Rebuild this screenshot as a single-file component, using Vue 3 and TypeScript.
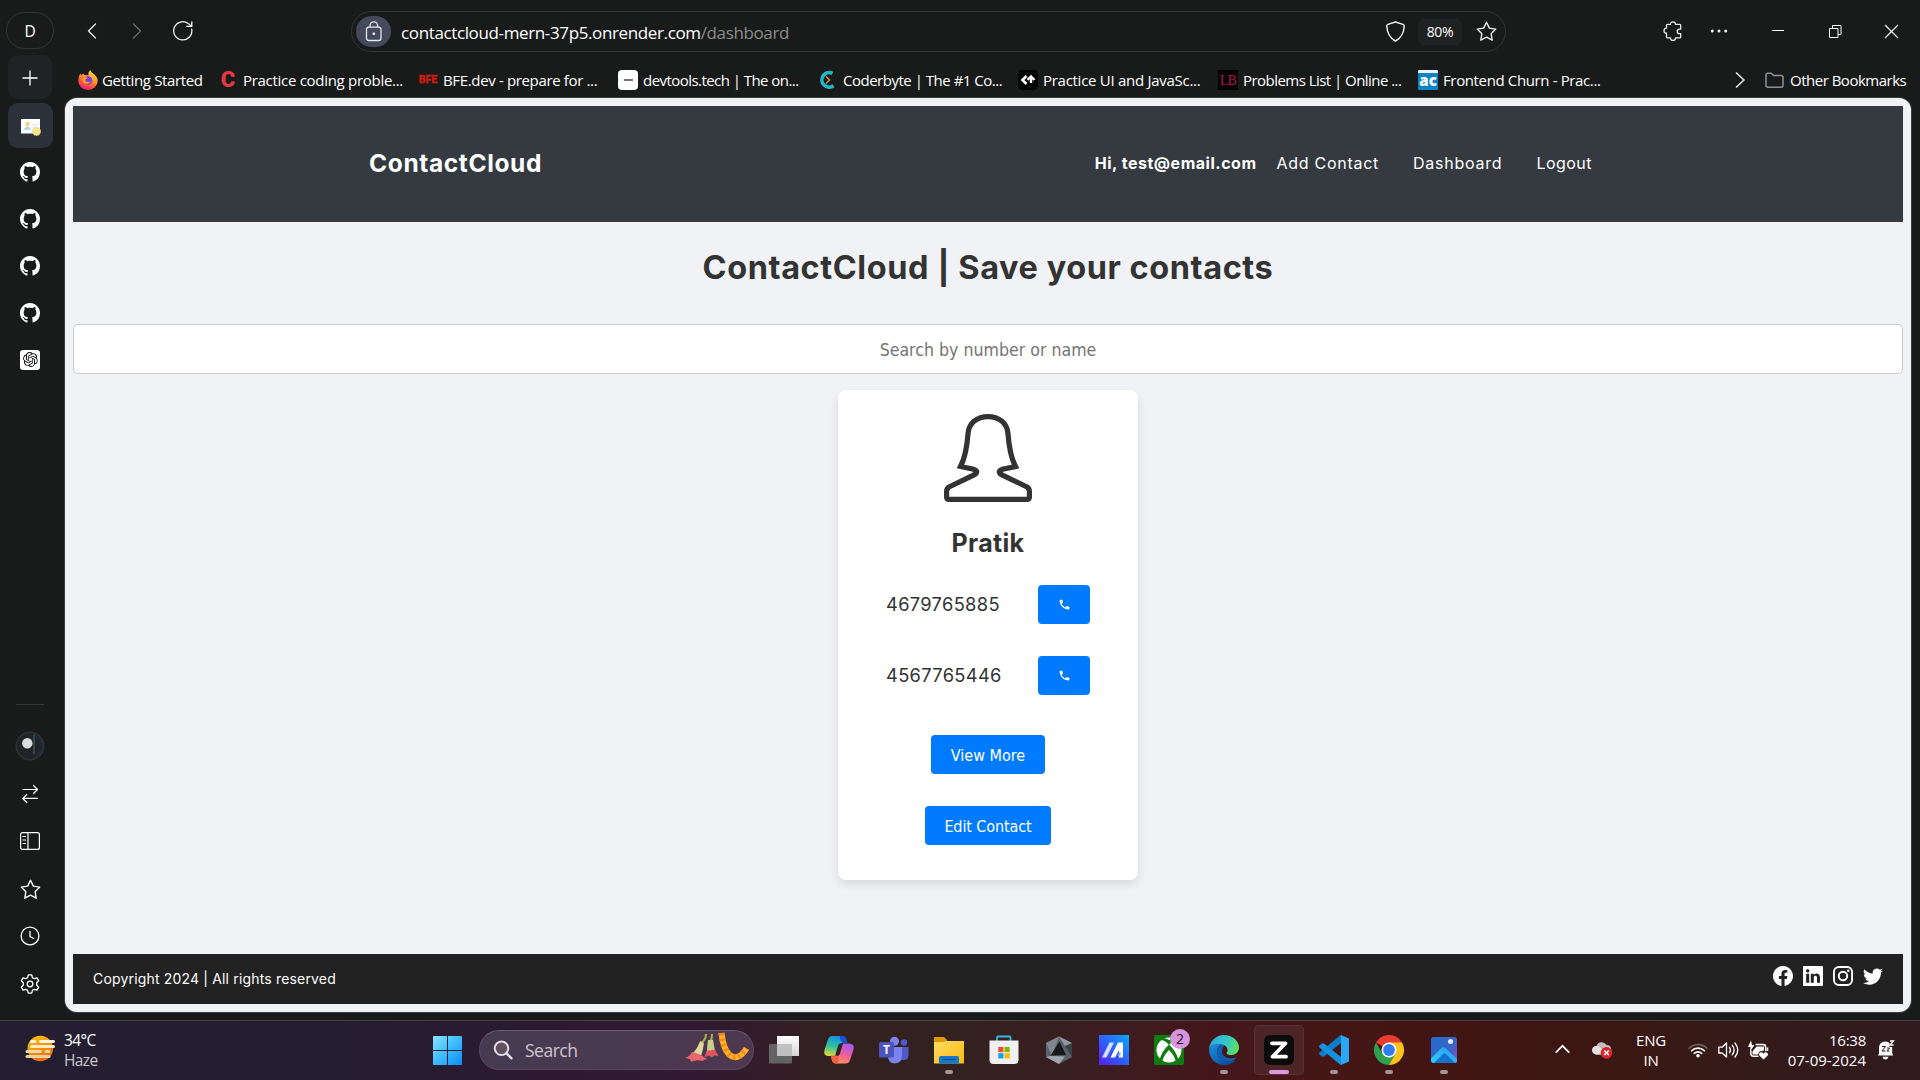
<script setup lang="ts">
interface Bookmark {
  label: string
  icon: string
  tracking: number
}

const bookmarks: Bookmark[] = [
  { label: 'Getting Started', icon: 'firefox', tracking: -0.36 },
  { label: 'Practice coding proble...', icon: 'codecademy', tracking: -0.29 },
  { label: 'BFE.dev - prepare for ...', icon: 'bfe', tracking: -0.35 },
  { label: 'devtools.tech | The on...', icon: 'devtools', tracking: -0.55 },
  { label: 'Coderbyte | The #1 Co...', icon: 'coderbyte', tracking: -0.49 },
  { label: 'Practice UI and JavaSc...', icon: 'practice', tracking: -0.28 },
  { label: 'Problems List | Online ...', icon: 'lb', tracking: -0.54 },
  { label: 'Frontend Churn - Prac...', icon: 'ac', tracking: -0.37 },
]

const contact = { name: 'Pratik', phones: ['4679765885', '4567765446'] }

const githubTabs = [1, 2, 3, 4]

const githubPath =
  'M8 0C3.58 0 0 3.58 0 8c0 3.54 2.29 6.53 5.47 7.59.4.07.55-.17.55-.38 0-.19-.01-.82-.01-1.49-2.01.37-2.53-.49-2.69-.94-.09-.23-.48-.94-.82-1.13-.28-.15-.68-.52-.01-.53.63-.01 1.08.58 1.23.82.72 1.21 1.87.87 2.33.66.07-.52.28-.87.51-1.07-1.78-.2-3.64-.89-3.64-3.95 0-.87.31-1.59.82-2.15-.08-.2-.36-1.02.08-2.12 0 0 .67-.21 2.2.82.64-.18 1.32-.27 2-.27s1.36.09 2 .27c1.53-1.04 2.2-.82 2.2-.82.44 1.1.16 1.92.08 2.12.51.56.82 1.27.82 2.15 0 3.07-1.87 3.75-3.65 3.95.29.25.54.73.54 1.48 0 1.07-.01 1.93-.01 2.2 0 .21.15.46.55.38A8.01 8.01 0 0 0 16 8c0-4.42-3.58-8-8-8'
const starPath = 'M10 1.2l2.7 5.6 6.1.9-4.4 4.4 1 6.2L10 15.4l-5.4 2.9 1-6.2L1.2 7.7l6.1-.9z'
const openaiPath =
  'M22.2819 9.8211a5.9847 5.9847 0 0 0-.5157-4.9108 6.0462 6.0462 0 0 0-6.5098-2.9A6.0651 6.0651 0 0 0 4.9807 4.1818a5.9847 5.9847 0 0 0-3.9977 2.9 6.0462 6.0462 0 0 0 .7427 7.0966 5.98 5.98 0 0 0 .511 4.9107 6.051 6.051 0 0 0 6.5146 2.9001A5.9847 5.9847 0 0 0 13.2599 24a6.0557 6.0557 0 0 0 5.7718-4.2058 5.9894 5.9894 0 0 0 3.9977-2.9001 6.0557 6.0557 0 0 0-.7475-7.0729zm-9.022 12.6081a4.4755 4.4755 0 0 1-2.8764-1.0408l.1419-.0804 4.7783-2.7582a.7948.7948 0 0 0 .3927-.6813v-6.7369l2.02 1.1686a.071.071 0 0 1 .038.052v5.5826a4.504 4.504 0 0 1-4.4945 4.4944zm-9.6607-4.1254a4.4708 4.4708 0 0 1-.5346-3.0137l.142.0852 4.783 2.7582a.7712.7712 0 0 0 .7806 0l5.8428-3.3685v2.3324a.0804.0804 0 0 1-.0332.0615L9.74 19.9502a4.4992 4.4992 0 0 1-6.1408-1.6464zM2.3408 7.8956a4.485 4.485 0 0 1 2.3655-1.9728V11.6a.7664.7664 0 0 0 .3879.6765l5.8144 3.3543-2.0201 1.1685a.0757.0757 0 0 1-.071 0l-4.8303-2.7865A4.504 4.504 0 0 1 2.3408 7.872zm16.5963 3.8558L13.1038 8.364 15.1192 7.2a.0757.0757 0 0 1 .071 0l4.8303 2.7913a4.4944 4.4944 0 0 1-.6765 8.1042v-5.6772a.79.79 0 0 0-.407-.667zm2.0107-3.0231l-.142-.0852-4.7735-2.7818a.7759.7759 0 0 0-.7854 0L9.409 9.2297V6.8974a.0662.0662 0 0 1 .0284-.0615l4.8303-2.7866a4.4992 4.4992 0 0 1 6.6802 4.66zM8.3065 12.863l-2.02-1.1638a.0804.0804 0 0 1-.038-.0567V6.0742a4.4992 4.4992 0 0 1 7.3757-3.4537l-.142.0805L8.704 5.459a.7948.7948 0 0 0-.3927.6813zm1.0976-2.3654l2.602-1.4998 2.6069 1.4998v2.9994l-2.5974 1.4997-2.6067-1.4997Z'
const phonePath =
  'M6.6 10.8c1.4 2.8 3.8 5.1 6.6 6.6l2.2-2.2c.3-.3.7-.4 1-.2 1.1.4 2.3.6 3.6.6.6 0 1 .4 1 1V20c0 .6-.4 1-1 1C10.6 21 3 13.4 3 4c0-.6.4-1 1-1h3.5c.6 0 1 .4 1 1 0 1.3.2 2.5.6 3.6.1.3 0 .7-.2 1z'
</script>

<template>
  <div class="screen">
    <div class="browser">
      <aside class="sidebar">
        <div class="profile">D</div>
        <div class="tile new-tab">
          <svg width="16" height="16" viewBox="0 0 16 16" fill="none" stroke="#fff" stroke-width="1.3"><path d="M8 .5v15M.5 8h15" /></svg>
        </div>
        <div class="tile active">
          <svg width="20" height="20" viewBox="0 0 20 20">
            <rect x="0" y="2" width="19" height="14.5" fill="#fdfdff" />
            <circle cx="6.5" cy="7" r="2.2" fill="#f5d77a" />
            <path d="M3 12.8c0-4 7-4 7 0z" fill="#a9d3f5" />
            <path d="M11 7.5h6M11 10h5" stroke="#e3e6ee" />
            <circle cx="15.5" cy="14.5" r="4" fill="#f7e392" stroke="#eed479" stroke-dasharray="1.5 1" />
          </svg>
        </div>
        <div v-for="t in githubTabs" :key="t" class="slot">
          <svg width="20" height="20" viewBox="0 0 16 16"><path :d="githubPath" fill="#fff" /></svg>
        </div>
        <div class="slot">
          <span class="gpt"><svg width="15" height="15" viewBox="0 0 24 24"><path :d="openaiPath" fill="#111" /></svg></span>
        </div>

        <div class="side-bottom">
          <div class="divider"></div>
          <div class="slot low">
            <svg width="30" height="30" viewBox="0 0 30 30">
              <circle cx="15" cy="15" r="13.7" fill="#222327" stroke="#2f3134" stroke-width="1.6" />
              <path d="M20.5 4.5l7 8v6l-7 7" fill="none" stroke="#1f2f45" stroke-width="1.5" />
              <path d="M19 3.5v19.5" stroke="#3c5f63" stroke-width="1.3" />
              <circle cx="12.3" cy="12.3" r="5.2" fill="#dcdcdc" />
            </svg>
          </div>
          <div class="slot low">
            <svg width="20" height="20" viewBox="0 0 20 20" fill="none" stroke="#fff" stroke-width="1.2" stroke-linecap="round" stroke-linejoin="round">
              <path d="M2.8 5.5h14.5M13.5 1.5l4 4-4 4M17.5 14.3H3M6.8 10.5l-4 4 4 4" />
            </svg>
          </div>
          <div class="slot low">
            <svg width="20" height="20" viewBox="0 0 20 20" fill="none" stroke="#fff" stroke-width="1.2">
              <rect x=".6" y="1.6" width="18.8" height="16.8" rx="2" />
              <path d="M8 1.6v16.8M2.5 5.5h3.5M2.5 9h3.5M2.5 12.5h3.5" />
            </svg>
          </div>
          <div class="slot low">
            <svg width="21" height="21" viewBox="0 0 20 20" fill="none" stroke="#fff" stroke-width="1.3" stroke-linejoin="round"><path :d="starPath" /></svg>
          </div>
          <div class="slot low">
            <svg class="clock-icon" width="20" height="20" viewBox="0 0 20 20" fill="none" stroke="#fff" stroke-width="1.3" stroke-linecap="round">
              <circle cx="10" cy="10" r="8.9" /><path d="M10 5.5v5l3.7 2" />
            </svg>
          </div>
          <div class="slot low">
            <svg width="20" height="20" viewBox="0 0 20 20" fill="none" stroke="#fff" stroke-width="1.3" stroke-linejoin="round">
              <path d="M8.3.9h3.4l.7 2.7 1.9 1.1 2.7-.8 1.7 2.9-2 1.9v2.6l2 1.9-1.7 2.9-2.7-.8-1.9 1.1-.7 2.7H8.3l-.7-2.7-1.9-1.1-2.7.8-1.7-2.9 2-1.9V8.7l-2-1.9L3 3.9l2.7.8 1.9-1.1z" />
              <circle cx="10" cy="10" r="2.8" />
            </svg>
          </div>
        </div>
      </aside>

      <div class="main">
        <div class="toolbar">
          <svg class="nav-back" width="20" height="20" viewBox="0 0 20 20" fill="none" stroke="#e8e8e8" stroke-width="1.3" stroke-linecap="round" stroke-linejoin="round"><path d="M13.5 3L6.5 10l7 7" /></svg>
          <svg class="nav-fwd" width="20" height="20" viewBox="0 0 20 20" fill="none" stroke="#6a6b6b" stroke-width="1.3" stroke-linecap="round" stroke-linejoin="round"><path d="M6.5 3l7 7-7 7" /></svg>
          <svg class="nav-reload" width="20" height="20" viewBox="0 0 20 20" fill="none" stroke="#f2f2f2" stroke-width="1.3" stroke-linecap="round" stroke-linejoin="round">
            <path d="M18.7 8.2A9.1 9.1 0 1 1 15.5 2.8L18.7 5.2M18.8.8v4.6h-5" />
          </svg>

          <div class="urlbar">
            <span class="lock">
              <svg width="18" height="21" viewBox="0 0 18 21" fill="none" stroke="#e4e8ef" stroke-width="1.3">
                <rect x="1.5" y="6.2" width="14.5" height="13.3" rx="2.3" />
                <path d="M5 6.2V4.7a3.8 3.8 0 0 1 7.6 0v1.5" />
                <circle cx="8.8" cy="12.8" r="1.3" fill="#fff" stroke="none" />
              </svg>
            </span>
            <span class="url">contactcloud-mern-37p5.onrender.com<span class="path">/dashboard</span></span>
            <svg width="19" height="21" viewBox="0 0 19 21" fill="none" stroke="#f0f0f0" stroke-width="1.5" stroke-linejoin="round">
              <path d="M9.5 1L17 3.4q1.3.4 1.2 1.8Q17.7 15.5 9.5 20 1.3 15.5.8 5.2.7 3.8 2 3.4z" />
            </svg>
            <span class="zoom">80%</span>
            <svg class="url-star" width="21" height="21" viewBox="0 0 20 20" fill="none" stroke="#f0f0f0" stroke-width="1.3" stroke-linejoin="round"><path :d="starPath" /></svg>
          </div>

          <svg class="ext" width="20" height="20" viewBox="0 0 20 20" fill="none" stroke="#e8e8e8" stroke-width="1.3" stroke-linejoin="round">
            <path d="M4.5 3.3h3a2.5 2.5 0 0 1 5 0h4.2a1 1 0 0 1 1 1v3.9h-1.2a2.2 2.2 0 0 0 0 4.4h1.2v3.3a1 1 0 0 1-1 1h-4.2a2.5 2.5 0 0 1-5 0h-3a1 1 0 0 1-1-1v-3.7a2.5 2.5 0 0 1 0-5V4.3a1 1 0 0 1 1-1z" />
          </svg>
          <svg class="more" width="20" height="20" viewBox="0 0 20 20" fill="#f0f0f0"><circle cx="3.3" cy="10" r="1.5" /><circle cx="10" cy="10" r="1.5" /><circle cx="16.7" cy="10" r="1.5" /></svg>
          <svg class="win" width="20" height="20" viewBox="0 0 20 20" stroke="#fff"><path d="M4 9.5h12" /></svg>
          <svg class="win" width="20" height="20" viewBox="0 0 20 20" fill="none" stroke="#fff"><path d="M3.5 7.5h8.5v9H3.5zM6.5 7.5v-3h8.5v9h-3" /></svg>
          <svg class="win" width="20" height="20" viewBox="0 0 20 20" fill="none" stroke="#fff" stroke-width="1.1"><path d="M3 4l13 13M16 4l-13 13" /></svg>
        </div>

        <div class="bookmarks">
          <div v-for="b in bookmarks" :key="b.label" class="bookmark" :class="b.icon">
            <svg v-if="b.icon === 'firefox'" width="20" height="20" viewBox="0 0 20 20">
              <defs>
                <linearGradient id="fx" x1=".8" y1="0" x2=".3" y2="1"><stop offset="0" stop-color="#ffe94a" /><stop offset=".45" stop-color="#ff9328" /><stop offset=".75" stop-color="#ff4a40" /><stop offset="1" stop-color="#f0208a" /></linearGradient>
              </defs>
              <path d="M12.6 0c.4 2.5 2 3 3.8 4.5 2 1.7 3.3 4 3.3 6.3A9.6 9.2 0 0 1 10 20 9.7 9.3 0 0 1 .3 10.5C.3 8 1 5.5 2.5 3.5l.7 1.8C4 4.3 4.5 4 5.5 3.7L6.7 5l3.7.2C9.9 3.2 11 1 12.6 0z" fill="url(#fx)" />
              <circle cx="10" cy="10.5" r="4.2" fill="#7a3fe0" />
              <path d="M4.5 7.5c2-1 4-.5 5.5.8-2 0-2.7 1-2.7 2 0 1.8 3.2 2.3 5.2 1-1.3 4-7.3 3.5-8-.8z" fill="#ff9a2a" />
            </svg>
            <span v-else-if="b.icon === 'codecademy'" class="logo-c">C</span>
            <span v-else-if="b.icon === 'bfe'" class="logo-bfe">BFE</span>
            <span v-else-if="b.icon === 'devtools'" class="logo-dev"><i></i></span>
            <svg v-else-if="b.icon === 'coderbyte'" width="20" height="20" viewBox="0 0 20 20" fill="none">
              <path d="M14.5 3.4A7.3 7.3 0 1 0 15.5 15.8" stroke="#20b9c7" stroke-width="3.6" />
              <path d="M8 6.5l3.5 3.5L8 13.5" stroke="#c98a3c" stroke-width="1.7" />
            </svg>
            <svg v-else-if="b.icon === 'practice'" width="20" height="20" viewBox="0 0 20 20" fill="none">
              <rect width="20" height="20" rx="4.5" fill="#000" />
              <path d="M8.5 6L4.5 10l4 4" stroke="#fff" stroke-width="2.6" />
              <path d="M9.5 9.8L13 6.5l3.500 3.500" stroke="#fff" stroke-width="2.4" />
              <path d="M13 7v6" stroke="#fff" stroke-width="2.4" />
            </svg>
            <span v-else-if="b.icon === 'lb'" class="logo-lb">LB</span>
            <span v-else class="logo-ac"><i></i><b>ac</b></span>
            <span class="bm-label" :style="{ letterSpacing: b.tracking + 'px' }">{{ b.label }}</span>
          </div>
          <svg class="bm-more" width="12" height="18" viewBox="0 0 12 18" fill="none" stroke="#f0f0f0" stroke-width="1.4"><path d="M2 1.5L10 9l-8 7.5" /></svg>
          <svg class="folder" width="19" height="17" viewBox="0 0 19 17" fill="none" stroke="#8f8f98" stroke-width="1.5" stroke-linejoin="round"><path d="M1 3q0-1.8 1.8-1.8h3.5L8.5 3.5h7.7q1.8 0 1.8 1.8v8q0 1.9-1.8 1.9H2.8Q1 15.2 1 13.3z" /></svg>
          <span class="bm-other">Other Bookmarks</span>
        </div>

        <div class="viewport">
          <header class="site-header">
            <div class="brand">ContactCloud</div>
            <nav class="site-nav">
              <span class="hi">Hi, test@email.com</span>
              <a class="add">Add Contact</a>
              <a class="dash">Dashboard</a>
              <a class="logout">Logout</a>
            </nav>
          </header>
          <h1>ContactCloud | Save your contacts</h1>
          <div class="search-input">Search by number or name</div>

          <section class="card">
            <svg class="avatar" width="90" height="90" viewBox="0 0 90 90" fill="none" stroke="#333" stroke-width="5.2" stroke-linejoin="miter">
              <path d="M45 3.6C34 3.6 26 10 25 20.5 24 35 22.5 44 17.5 53.5L30.5 56.2Q36.5 58.5 31.5 61.7L6 74Q3.6 75.5 3.6 78.5V84Q3.6 86.4 6 86.4H84Q86.4 86.4 86.4 84V78.5Q86.4 75.5 84 74L58.5 61.7Q53.5 58.5 59.5 56.2L72.5 53.5C67.5 44 66 35 65 20.5 64 10 56 3.6 45 3.6z" />
            </svg>
            <h2>{{ contact.name }}</h2>
            <div v-for="p in contact.phones" :key="p" class="phone-row">
              <span class="phone">{{ p }}</span>
              <button class="btn call"><svg width="13" height="13" viewBox="0 0 24 24"><path :d="phonePath" fill="#fff" /></svg></button>
            </div>
            <button class="btn view">View More</button>
            <button class="btn edit">Edit Contact</button>
          </section>

          <footer class="site-footer">
            <span class="copy">Copyright 2024 | All rights reserved</span>
            <div class="social">
              <svg width="20" height="20" viewBox="0 0 16 16" fill="#fff"><path d="M16 8.049c0-4.446-3.582-8.05-8-8.05C3.58 0-.002 3.603-.002 8.05c0 4.017 2.926 7.347 6.75 7.951v-5.625h-2.03V8.05H6.75V6.275c0-2.017 1.195-3.131 3.022-3.131.876 0 1.791.157 1.791.157v1.98h-1.009c-.993 0-1.303.621-1.303 1.258v1.51h2.218l-.354 2.326H9.25V16c3.824-.604 6.75-3.934 6.75-7.951" /></svg>
              <svg width="20" height="20" viewBox="0 0 16 16" fill="#fff"><path d="M0 .6C0 .3.3 0 .6 0h14.8c.3 0 .6.3.6.6v14.8c0 .3-.3.6-.6.6H.6c-.3 0-.6-.3-.6-.6zm4.943 12.794V6.169H2.542v7.225zm-1.2-8.212c.837 0 1.358-.554 1.358-1.248-.015-.709-.52-1.248-1.342-1.248S2.4 3.226 2.4 3.934c0 .694.521 1.248 1.327 1.248zm4.908 8.212V9.359c0-.216.016-.432.08-.586.173-.431.568-.878 1.232-.878.869 0 1.216.662 1.216 1.634v3.865h2.401V9.25c0-2.22-1.184-3.252-2.764-3.252-1.274 0-1.845.7-2.165 1.193v.025h-.016l.016-.025V6.169h-2.4c.03.678 0 7.225 0 7.225z" /></svg>
              <svg width="20" height="20" viewBox="0 0 20 20" fill="none" stroke="#fff" stroke-width="1.9"><rect x=".95" y=".95" width="18.1" height="18.1" rx="5" /><circle cx="10" cy="10" r="4.2" /><circle cx="15.3" cy="4.7" r="1.2" fill="#fff" stroke="none" /></svg>
              <svg width="20" height="20" viewBox="0 0 16 16" fill="#fff"><path d="M5.026 15c6.038 0 9.341-5.003 9.341-9.334q.002-.211-.006-.422A6.7 6.7 0 0 0 16 3.542a6.7 6.7 0 0 1-1.889.518 3.3 3.3 0 0 0 1.447-1.817 6.5 6.5 0 0 1-2.087.793A3.286 3.286 0 0 0 7.875 6.03a9.32 9.32 0 0 1-6.767-3.429 3.29 3.29 0 0 0 1.018 4.382A3.3 3.3 0 0 1 .64 6.575v.045a3.29 3.29 0 0 0 2.632 3.218 3.2 3.2 0 0 1-.865.115 3 3 0 0 1-.614-.057 3.28 3.28 0 0 0 3.067 2.277A6.6 6.6 0 0 1 .78 13.58a6 6 0 0 1-.78-.045A9.34 9.34 0 0 0 5.026 15" /></svg>
            </div>
          </footer>
        </div>
      </div>
    </div>

    <div class="taskbar">
      <div class="weather">
        <svg width="31" height="27" viewBox="0 0 31 27">
          <defs><linearGradient id="sun" x1="0" y1="0" x2=".5" y2="1"><stop offset="0" stop-color="#ffc80a" /><stop offset="1" stop-color="#ee6a0c" /></linearGradient></defs>
          <circle cx="15.3" cy="13.5" r="12.8" fill="url(#sun)" />
          <g stroke-width="3" stroke-linecap="round">
            <path d="M6.5 6.5h3.5M15.5 6.5h13" stroke="#f9f3df" /><path d="M6.5 11.5h22" stroke="#f8ecca" />
            <path d="M2 16.5h13.5M21 16.5h3" stroke="#f0d9a5" /><path d="M2 21.5h22" stroke="#ecd09b" />
          </g>
        </svg>
        <div class="weather-text"><span class="temp">34°C</span><span class="cond">Haze</span></div>
      </div>

      <div class="start">
        <svg width="29" height="29" viewBox="0 0 29 29">
          <defs><linearGradient id="win" x1="0" y1="0" x2="1" y2="1"><stop offset="0" stop-color="#8be3ff" /><stop offset=".5" stop-color="#3cbcff" /><stop offset="1" stop-color="#0a8cf5" /></linearGradient></defs>
          <path d="M1 0h13v14H0V1q0-1 1-1zM15 0h13q1 0 1 1v13H15zM0 15h14v14H1q-1 0-1-1zM15 15h14v13q0 1-1 1H15z" fill="url(#win)" />
        </svg>
      </div>
      <div class="search-pill">
        <svg width="20" height="20" viewBox="0 0 20 20" fill="none"><circle cx="8.5" cy="8.3" r="6.8" stroke="#e2dbe3" stroke-width="2" fill="#61505f" /><path d="M13.5 13.3l5 5" stroke="#e2dbe3" stroke-width="2.4" stroke-linecap="round" /></svg>
        <span class="search-label">Search</span>
        <svg class="flowers" width="66" height="30" viewBox="0 0 66 30" fill="none">
          <path d="M22 1Q22 6 18 9.5M28 1q0 4-1 6" stroke="#a9b43c" stroke-width="2" />
          <path d="M16 8l4 2q-1 8-3 13l-9-2q6-6 8-13z" fill="#dcd69a" />
          <path d="M8 19q5 1 9 3l6 4q-2 1-4 .5l1 1.5-7-.8-6 1.5-1-2.5-5-1.5q5-1 7-5.7z" fill="#e8656b" />
          <path d="M24 7l5-.2q1 6 2 11l-8 1q0-6 1-11.8z" fill="#c9cf86" />
          <path d="M22.5 18l8.5-1.5 3.5 6.5-4-.5-3 2-2-2-5 1.5z" fill="#e0555e" />
          <path d="M37.5 0Q39 15 45 21.5q9 7.5 17.5-6" stroke="#ffb42c" stroke-width="6" />
          <path d="M37.5 0Q39 15 45 21.5q9 7.5 17.5-6" stroke="#f78a14" stroke-width="6" stroke-dasharray="2.5 3" />
        </svg>
      </div>

      <div class="apps">
        <div class="app">
          <svg width="30" height="30" viewBox="0 0 30 30"><defs><linearGradient id="tv" x1="0" y1="0" x2="0" y2="1"><stop offset="0" stop-color="#fff" /><stop offset="1" stop-color="#d5d5d5" /></linearGradient></defs><rect x="8" y="1" width="22" height="20" fill="url(#tv)" /><rect x="0" y="9" width="23" height="19.5" rx="1" fill="#6f6f6f" fill-opacity=".85" /><rect x="8" y="9" width="15" height="12" fill="#c0c0c0" /></svg>
        </div>
        <div class="app">
          <svg width="30" height="30" viewBox="0 0 30 30">
            <defs>
              <linearGradient id="cp1" x1=".5" y1="0" x2=".2" y2="1"><stop offset="0" stop-color="#1b8fe6" /><stop offset=".5" stop-color="#2cc0a0" /><stop offset="1" stop-color="#e3d83a" /></linearGradient>
              <linearGradient id="cp2" x1=".7" y1="0" x2=".3" y2="1"><stop offset="0" stop-color="#a45cf0" /><stop offset=".5" stop-color="#ea5b9c" /><stop offset="1" stop-color="#ff9a55" /></linearGradient>
            </defs>
            <path d="M8.5 1H18q3 0 4 3l1 4h-5q-3 0-4 3l-3 10H5q-6 0-4.5-6L4 4.5Q5 1 8.5 1z" fill="url(#cp1)" />
            <path d="M16 1h3q2.5 0 3.3 3l1.2 4h-5L16 4z" fill="#1d4fcf" />
            <path d="M21.5 28.5H12q-3 0-4-3l-1-4h5q3 0 4-3L19 8.5h6q6 0 4.5 6L26 25q-1 3.5-4.5 3.5z" fill="url(#cp2)" />
            <path d="M7 20.5h6l2 4-1 4h-2q-3 0-4-3z" fill="#f2603c" />
          </svg>
        </div>
        <div class="app">
          <svg width="30" height="30" viewBox="0 0 30 30">
            <circle cx="25" cy="7.5" r="3.2" fill="#5059c9" /><path d="M20 12h9.5v8q0 5-4.5 5h-5z" fill="#5059c9" />
            <circle cx="15.5" cy="6.2" r="4.5" fill="#7b83eb" /><path d="M9 12h14v9q0 7-7 7.5-7-.5-7-7z" fill="#7b83eb" />
            <rect x="0" y="7" width="15" height="15.5" rx="1.5" fill="#4b53bc" />
            <text x="7.5" y="19" text-anchor="middle" font-family="Open Sans, sans-serif" font-weight="700" font-size="12" fill="#fff">T</text>
          </svg>
        </div>
        <div class="app">
          <svg width="30" height="30" viewBox="0 0 30 30">
            <defs><linearGradient id="fe" x1="0" y1="0" x2="1" y2="1"><stop offset="0" stop-color="#ffdc64" /><stop offset="1" stop-color="#f8b80f" /></linearGradient></defs>
            <path d="M0 3q0-1 1-1h9l3 3v5H0z" fill="#dc9a00" /><path d="M0 7h9l4-1h17v22.5H0z" fill="url(#fe)" />
            <path d="M5 28.5V23q0-2 2-2h16q2 0 2 2v5.5z" fill="#1479cd" /><path d="M8.5 24.5h13" stroke="#0a4f94" stroke-width="1.2" />
          </svg>
          <i class="ind"></i>
        </div>
        <div class="app">
          <svg width="30" height="30" viewBox="0 0 30 30">
            <path d="M8 6V2.5q0-1 1-1h11.5q1 0 1 1V6" fill="none" stroke="#33b8ee" stroke-width="1.8" />
            <path d="M.5 5.5h29V25q0 4-4 4h-21q-4 0-4-4z" fill="#f0f0f0" />
            <path d="M9.300 12h5.200v5.200H9.300z" fill="#f25022" /><path d="M15.500 12h5.200v5.200h-5.200z" fill="#7fba00" /><path d="M9.300 18.200h5.200v5.200H9.300z" fill="#00a4ef" /><path d="M15.500 18.200h5.200v5.200h-5.200z" fill="#ffb900" />
          </svg>
        </div>
        <div class="app">
          <svg width="30" height="30" viewBox="0 0 30 30">
            <path d="M15 1.5l13 6.5v14l-13 7-13-7V8z" fill="#5b6168" /><path d="M15 1.5L28 8l-7 3z" fill="#8f979e" /><path d="M2 8l13-6.5L8 21z" fill="#7e868e" /><path d="M28 8v14l-7-11z" fill="#3c4146" /><path d="M2 22l5-1 14 .5L15 29z" fill="#a0a8af" /><path d="M15.5 6.5L22 20l-15.5.5z" fill="#17191c" />
          </svg>
        </div>
        <div class="app">
          <svg width="30" height="30" viewBox="0 0 30 30">
            <defs><linearGradient id="ma" x1="0" y1="1" x2="1" y2="0"><stop offset="0" stop-color="#5a1cf0" /><stop offset=".5" stop-color="#2b62fb" /><stop offset="1" stop-color="#0aa8ff" /></linearGradient></defs>
            <rect width="30" height="30" fill="url(#ma)" />
            <path d="M3 22.5L10.5 7.5H15L7.5 22.5z" fill="#d4dcff" /><path d="M11.5 22.5L19 7.5h5v15h-4V15l-4 7.500z" fill="#fff" /><path d="M17.5 20.5l4-3.500v3.500z" fill="#7f9dff" />
          </svg>
        </div>
        <div class="app">
          <svg width="30" height="30" viewBox="0 0 30 30">
            <rect width="30" height="30" rx="2" fill="#107c10" /><circle cx="15" cy="15" r="12.5" fill="#fff" />
            <path d="M6 5Q11 5 15 10q4-5 9-5l-2-2Q18 3 15 5q-3-2-7-2z" fill="#107c10" />
            <path d="M15 9.5Q8 16 5.500 25L8 26.500Q10 20 15 15q5 5 7 11.500l2.500-1.500Q22 16 15 9.500z" fill="#107c10" />
          </svg>
          <b class="badge">2</b>
        </div>
        <div class="app">
          <svg width="30" height="30" viewBox="0 0 30 30">
            <defs>
              <linearGradient id="ed1" x1="0" y1=".3" x2="1" y2=".6"><stop offset="0" stop-color="#2ba7e6" /><stop offset=".55" stop-color="#35c8c6" /><stop offset="1" stop-color="#62e05a" /></linearGradient>
              <linearGradient id="ed2" x1="0" y1="0" x2=".8" y2="1"><stop offset="0" stop-color="#1b93e0" /><stop offset="1" stop-color="#0c4a9c" /></linearGradient>
            </defs>
            <path d="M.2 13.5C1 5.500 7.500 0 15 0c8.500 0 15 6 15 12.500 0 5-4 7.500-8 7.500-3.500 0-5-1.300-4-2.800 1.500-2 .5-6.700-5.500-7.700C7 8.700 2.500 10 .2 13.500z" fill="url(#ed1)" />
            <path d="M.2 13.5C2.500 9.500 8 8 12.500 9.500c-4 1.500-5.500 6-4 10C10 24 16 27.500 22 26.500q3-.6 4.500-1.500C24 28.500 19.500 30 15.500 30 6 30-.5 22.500.2 13.500z" fill="url(#ed2)" />
            <path d="M12.500 9.500c-4 1.500-5.500 6-4 10C10 24 16 27.500 22 26.500q3.500-.7 6-4.500-6 2.500-11.500 0c-5-2.500-4-8-1-11.500z" fill="#0f5fb4" />
          </svg>
          <i class="ind"></i>
        </div>
        <div class="app current">
          <svg width="30" height="30" viewBox="0 0 30 30">
            <rect width="30" height="30" rx="6" fill="#0b0b0c" />
            <path d="M8 8.300h13.500L8.500 21.700H22" fill="none" stroke="#fff" stroke-width="3.8" stroke-linecap="round" stroke-linejoin="round" />
          </svg>
          <i class="ind wide"></i>
        </div>
        <div class="app">
          <svg width="30" height="30" viewBox="0 0 30 30">
            <path d="M22 0v8L5 21.500q-1 .7-2 0L.5 19.500q-1-1 0-2L21 .5z" fill="#0a7dcc" />
            <path d="M22 30v-8L5 8.500q-1-.7-2 0L.5 10.500q-1 1 0 2L21 29.500z" fill="#1490df" />
            <path d="M22 0l8 3.500v23L22 30z" fill="#2aa6f4" />
          </svg>
          <i class="ind"></i>
        </div>
        <div class="app">
          <svg width="30" height="30" viewBox="0 0 30 30">
            <path d="M15 15L2 7.500A15 15 0 0 1 28 7.500z" fill="#ea3b30" /><path d="M2 7.500A15 15 0 0 0 15 30l6.500-11.200L15 15 8.500 18.700z" fill="#2fa04f" /><path d="M28 7.500H15L21.500 18.700 15 30A15 15 0 0 0 28 7.500z" fill="#fcc41c" />
            <circle cx="15" cy="15" r="7.5" fill="#fff" /><circle cx="15" cy="15" r="5.9" fill="#2f7cf0" />
          </svg>
          <i class="ind"></i>
        </div>
        <div class="app">
          <svg width="30" height="30" viewBox="0 0 30 30">
            <defs>
              <linearGradient id="ph" x1="0" y1="0" x2="1" y2="1"><stop offset="0" stop-color="#1d6fd0" /><stop offset=".6" stop-color="#3d62c4" /><stop offset="1" stop-color="#8a55c0" /></linearGradient>
              <linearGradient id="ph2" x1="0" y1="1" x2="1" y2="0"><stop offset="0" stop-color="#2fd0ff" /><stop offset="1" stop-color="#2b97ee" /></linearGradient>
            </defs>
            <rect x="2" y="2" width="26" height="26" rx="2.5" fill="url(#ph)" />
            <path d="M2 23.500l10.500-10.500q2-1.700 4 0L28 24v1.500q0 2.500-2.500 2.500H5q-3 0-3-3z" fill="url(#ph2)" />
            <path d="M5 28L14 19q1.500-1.300 3 0l9 9z" fill="#1670cc" />
            <circle cx="21.5" cy="6.5" r="2.5" fill="#e6f0fb" />
          </svg>
          <i class="ind"></i>
        </div>
      </div>

      <div class="tray">
        <svg class="t-chev" width="15" height="10" viewBox="0 0 15 10" fill="none" stroke="#fff" stroke-width="1.7" stroke-linecap="round"><path d="M1.200 8.200l6.300-6.400 6.300 6.400" /></svg>
        <svg class="t-cloud" width="21" height="18" viewBox="0 0 21 18">
          <path d="M4.500 13.500a4.300 4.300 0 0 1 0-8.500A5.500 5.500 0 0 1 14.500 4a4.800 4.800 0 0 1 1 9.500z" fill="#c3bcbc" /><path d="M4 13.500A4.200 4.200 0 0 1 4.500 5c3 0 4 2 6 3.500v5z" fill="#e6e2e2" />
          <circle cx="14.5" cy="11.8" r="5.9" fill="#d9252c" /><path d="M12.200 9.500l4.600 4.600M16.800 9.500l-4.600 4.600" stroke="#fff" stroke-width="1.5" />
        </svg>
        <div class="lang"><span>ENG</span><span>IN</span></div>
        <svg class="t-wifi" width="20" height="16" viewBox="0 0 20 16" fill="none" stroke="#fff" stroke-width="1.6" stroke-linecap="round">
          <path d="M1 6.200a12.700 12.700 0 0 1 18 0" stroke="#766260" /><path d="M3.600 8.800a9 9 0 0 1 12.800 0M6.300 11.400a5.200 5.200 0 0 1 7.400 0" /><circle cx="10" cy="13.8" r="1.8" fill="#fff" stroke="none" />
        </svg>
        <svg class="t-vol" width="21" height="18" viewBox="0 0 21 18" fill="none" stroke="#fff" stroke-width="1.3" stroke-linecap="round" stroke-linejoin="round">
          <path d="M.8 6.200h3.400L8.500 2v14l-4.300-4H.8zM11.500 6.300q2 2.700 0 5.400M14.200 4.200q3.800 4.800 0 9.600M17 2q5.500 7 0 14" />
        </svg>
        <svg class="t-bat" width="21" height="20" viewBox="0 0 21 20" fill="none" stroke="#fff" stroke-width="1.5" stroke-linejoin="round">
          <path d="M7.500 4.500H15q2.700 0 2.700 2.700v4M2.800 10v3.500q0 2.700 2.700 2.700h5" /><path d="M8.500 6.500H16v4l-4.500 1L10 14.500H4.500v-3z" fill="#fff" stroke="none" />
          <path d="M3 .5L0 7h2.500L2 11.500 6.500 5H4z" fill="#fff" stroke="none" />
          <path d="M15.500 19.500l-4-3.800q-1.200-2.400.8-3.300 2-.6 3.200 1.300 1.200-1.900 3.200-1.300 2 .9.8 3.300z" fill="#fff" stroke="none" /><path d="M19.500 7.500v3.500" />
        </svg>
        <div class="clock"><span class="time">16:38</span><span class="date">07-09-2024</span></div>
        <svg class="t-bell" width="18" height="20" viewBox="0 0 18 20">
          <path d="M1 15.500l1-2V8q0-6.500 6.500-6.500Q11 1.500 12.500 3v4h2.700v6.500l1 2z" fill="#fff" /><path d="M5.500 16.800h6q-.5 2.700-3 2.700t-3-2.700z" fill="#fff" />
          <path d="M5 6.500h3.500L5 11h3.500M10 8h2.500L10 11h2.500" stroke="#33191a" stroke-width="1" fill="none" /><path d="M13 1h3.500L13 5h3.500" stroke="#fff" stroke-width="1.3" fill="none" />
        </svg>
      </div>
    </div>
  </div>
</template>

<style>
html,
body {
  margin: 0;
  background: #191b1a;
}
</style>

<style scoped>
.screen {
  width: 1920px;
  height: 1080px;
  display: flex;
  flex-direction: column;
  overflow: hidden;
  background: #191b1a;
  font-family: 'Open Sans', 'Noto Sans', sans-serif;
  color: #fff;
}
svg {
  display: block;
  flex: none;
  overflow: visible;
}
.browser {
  height: 1020px;
  display: flex;
}

/* Sidebar */
.sidebar {
  width: 65px;
  height: 1020px;
  box-sizing: border-box;
  padding: 12px 0 12px;
  display: flex;
  flex-direction: column;
}
.profile {
  width: 48px;
  height: 37px;
  box-sizing: border-box;
  margin: 0 0 6px 6px;
  border: 1px solid #343635;
  border-radius: 19px;
  display: flex;
  align-items: center;
  justify-content: center;
  font-size: 15.5px;
}
.tile {
  width: 44px;
  height: 44px;
  margin-left: 8px;
  border-radius: 10px;
  display: flex;
  align-items: center;
  justify-content: center;
}
.new-tab {
  background: #202326;
  margin-bottom: 4px;
}
.new-tab svg {
  margin-top: 1px;
}
.active {
  width: 45px;
  height: 45px;
  background: #2b323b;
}
.active svg {
  margin-top: 2px;
}
.slot {
  width: 60px;
  height: 47px;
  display: flex;
  align-items: center;
  justify-content: center;
}
.gpt {
  width: 20px;
  height: 20px;
  border-radius: 3px;
  background: #fff;
  display: flex;
  align-items: center;
  justify-content: center;
}
.side-bottom {
  margin-top: auto;
}
.divider {
  width: 28px;
  height: 1px;
  margin: 0 0 17px 16px;
  background: #363837;
}
.low {
  height: 47.6px;
}
.clock-icon {
  margin: 0 1px 1px 0;
}

/* Toolbar */
.main {
  width: 1855px;
  display: flex;
  flex-direction: column;
}
.toolbar {
  height: 62px;
  display: flex;
  align-items: center;
}
.nav-back {
  margin-left: 17px;
}
.nav-fwd {
  margin-left: 25px;
}
.nav-reload {
  margin-left: 26px;
}
.urlbar {
  width: 1155px;
  height: 41px;
  box-sizing: border-box;
  margin-left: 158px;
  padding: 0 8px 0 4px;
  border: 1px solid #343635;
  border-radius: 21px;
  display: flex;
  align-items: center;
}
.lock {
  width: 35px;
  height: 31px;
  border-radius: 16px;
  background: #424a5b;
  display: flex;
  align-items: center;
  justify-content: center;
}
.url {
  margin: 4px auto 0 10px;
  font-size: 17px;
  line-height: 24px;
  letter-spacing: -0.37px;
  white-space: nowrap;
}
.path {
  color: #8b8c8b;
}
.zoom {
  width: 44px;
  height: 26px;
  margin: 1px 14px 0 13px;
  border-radius: 6px;
  background: #1f2122;
  font-size: 14px;
  line-height: 26px;
  letter-spacing: -0.3px;
  text-align: center;
}
.ext {
  margin-left: 157px;
}
.more {
  margin-left: 26px;
}
.win {
  margin-left: 38px;
}
.more + .win {
  margin-left: 39px;
}
.win:last-child {
  margin-left: 36px;
}

/* Bookmarks */
.bookmarks {
  height: 36px;
  display: flex;
  align-items: center;
  font-size: 15px;
  line-height: 20px;
  white-space: nowrap;
}
.bookmark {
  width: 200px;
  box-sizing: border-box;
  display: flex;
  align-items: center;
  gap: 5px;
}
.bookmark.firefox {
  width: 140px;
  margin-left: 13px;
  gap: 4px;
}
.bm-label,
.bm-other {
  margin-top: -1px;
}
.logo-c,
.logo-bfe,
.logo-dev,
.logo-lb,
.logo-ac {
  width: 20px;
  height: 20px;
  flex: none;
  text-align: center;
}
.logo-c {
  color: #e6393f;
  font: 900 22px/20px 'Roboto', sans-serif;
}
.logo-bfe {
  color: #d01a10;
  font: 700 10.5px/20px 'Roboto', sans-serif;
  -webkit-text-stroke: 0.4px #d01a10;
}
.logo-dev {
  border-radius: 4px;
  background: #fff;
  display: flex;
  align-items: center;
  justify-content: center;
}
.logo-dev i {
  width: 9px;
  height: 2px;
  background: #777;
}
.logo-lb {
  background: #000;
  color: #b3174e;
  font: 400 14px/21px 'Liberation Serif', serif;
  letter-spacing: -0.6px;
}
.logo-ac {
  background: #0b84c8;
  font: 700 15px/14px 'Open Sans', sans-serif;
  border-radius: 1px;
  overflow: hidden;
}
.logo-ac i {
  display: block;
  height: 3px;
  background: #eef3f6;
}
.logo-ac b {
  display: block;
}
.bm-more {
  margin-left: 116px;
}
.folder {
  margin: 0 6px 0 19px;
}
.bm-other {
  letter-spacing: -0.5px;
}

/* Page */
.viewport {
  width: 1846px;
  height: 914px;
  box-sizing: border-box;
  padding: 8px;
  border-radius: 12px;
  background: #f0f2f5;
  box-shadow: 0 0 0 1px #3a3c3d;
  color: #333;
  font-family: 'Inter', sans-serif;
  display: flex;
  flex-direction: column;
}
.site-header {
  height: 116px;
  flex: none;
  box-sizing: border-box;
  padding: 0 311px 2px 296px;
  background: #343a40;
  color: #fff;
  display: flex;
  align-items: center;
  justify-content: space-between;
}
.brand {
  font-size: 24.5px;
  font-weight: 700;
  letter-spacing: 0.62px;
}
.site-nav {
  display: flex;
  font-size: 16px;
  white-space: nowrap;
}
.hi {
  font-weight: 700;
  letter-spacing: 0.52px;
  margin-right: 20px;
}
.add {
  letter-spacing: 0.72px;
  margin-right: 34px;
}
.dash {
  letter-spacing: 0.76px;
  margin-right: 34px;
}
.logout {
  letter-spacing: 0.48px;
}
h1 {
  height: 102px;
  flex: none;
  box-sizing: border-box;
  margin: 0;
  font-size: 32.5px;
  font-weight: 700;
  line-height: 92px;
  letter-spacing: 0.57px;
  text-align: center;
}
.search-input {
  height: 50px;
  flex: none;
  box-sizing: border-box;
  border: 1px solid #ccc;
  border-radius: 5px;
  background: #fff;
  color: #757575;
  font-family: 'DejaVu Sans Condensed', 'Noto Sans', sans-serif;
  font-size: 17.6px;
  line-height: 51px;
  text-align: center;
}
.card {
  width: 300px;
  height: 490px;
  flex: none;
  box-sizing: border-box;
  margin: 16px auto 0;
  padding-top: 23px;
  border-radius: 8px;
  background: #fff;
  box-shadow: 0 4px 8px rgba(0, 0, 0, 0.1);
  display: flex;
  flex-direction: column;
  align-items: center;
}
h2 {
  margin: 21px 0 22px;
  font-size: 25px;
  line-height: 39px;
  letter-spacing: 0.3px;
}
.phone-row {
  width: 204px;
  height: 39px;
  margin-bottom: 32px;
  display: flex;
  align-items: center;
  justify-content: space-between;
}
.phone {
  margin-bottom: 2px;
  font-size: 18.3px;
  letter-spacing: 0.33px;
}
.btn {
  height: 39px;
  padding: 0;
  border: 0;
  border-radius: 4px;
  background: #007bff;
  color: #fff;
  font: 16px 'DejaVu Sans Condensed', 'Noto Sans', sans-serif;
  display: flex;
  align-items: center;
  justify-content: center;
}
.call {
  width: 52px;
}
.view,
.edit {
  padding-top: 2px;
}
.view {
  width: 114px;
  margin-top: 8px;
}
.edit {
  width: 126px;
  margin-top: 32px;
  letter-spacing: -0.1px;
}
.site-footer {
  height: 50px;
  margin-top: auto;
  padding: 0 20px;
  background: #222;
  color: #fff;
  display: flex;
  align-items: center;
  justify-content: space-between;
}
.copy {
  margin-bottom: 2px;
  font-size: 14px;
  letter-spacing: 0.17px;
}
.social {
  display: flex;
  gap: 10px;
  margin-bottom: 6px;
}

/* Taskbar */
.taskbar {
  height: 60px;
  box-sizing: border-box;
  border-top: 1px solid #4b424c;
  padding-bottom: 1px;
  background: linear-gradient(90deg, #231f30 0, #241d30 330px, #2c1a31 520px, #311a31 700px, #33211f 840px, #33211f 970px, #3c1d1f 1110px, #43171b 1200px, #451616 1320px, #3d1511 1560px, #361a16 1700px, #301b20 1920px);
  display: flex;
  align-items: center;
}
.weather {
  width: 408px;
  padding-left: 25px;
  display: flex;
  align-items: center;
}
.weather svg {
  margin-bottom: 4px;
}
.weather-text {
  margin: -1px 0 0 8px;
  display: flex;
  flex-direction: column;
  font-size: 15.5px;
  line-height: 20px;
  letter-spacing: -0.6px;
}
.cond {
  color: #c9c6cb;
}
.search-pill {
  width: 275px;
  height: 40px;
  box-sizing: border-box;
  margin-left: 17px;
  padding: 0 3px 0 13px;
  border: 1px solid #5a4862;
  border-top-color: #6d5b74;
  border-radius: 20px;
  background: linear-gradient(90deg, #453a50, #4d3850);
  display: flex;
  align-items: center;
}
.search-label {
  margin-left: 12px;
  color: #cfc6d0;
  font-size: 17.5px;
  letter-spacing: -0.49px;
}
.flowers {
  margin: -5px 0 0 auto;
}
.apps {
  display: flex;
  margin-left: 5px;
}
.app {
  position: relative;
  width: 50px;
  height: 50px;
  box-sizing: border-box;
  margin-right: 5px;
  padding-top: 10px;
  display: flex;
  justify-content: center;
}
.current {
  border-radius: 5px;
  background: #4d2527;
  box-shadow: inset 0 0 0 1px #593133;
}
.ind {
  position: absolute;
  left: 21px;
  bottom: 1px;
  width: 8px;
  height: 4px;
  border-radius: 2px;
  background: #a39395;
}
.wide {
  left: 15px;
  width: 20px;
  background: #d99ae0;
}
.badge {
  position: absolute;
  left: 26px;
  top: 4px;
  width: 20px;
  height: 20px;
  border-radius: 50%;
  background: #d795e0;
  color: #1c0f1e;
  font-size: 14px;
  font-weight: 400;
  line-height: 20px;
  text-align: center;
}
.tray {
  margin-left: 81px;
  display: flex;
  align-items: center;
  font-size: 15px;
  line-height: 20px;
  letter-spacing: -0.25px;
}
.lang,
.clock {
  margin-top: -1px;
}
.t-chev {
  margin-bottom: 2px;
}
.t-cloud {
  margin-left: 22px;
}
.lang {
  width: 50px;
  margin-left: 13px;
  display: flex;
  flex-direction: column;
  align-items: center;
}
.t-wifi {
  margin-left: 12px;
}
.t-vol {
  margin-left: 10px;
}
.t-bat {
  margin-left: 9px;
}
.clock {
  width: 97px;
  display: flex;
  flex-direction: column;
  align-items: flex-end;
}
.date {
  letter-spacing: 0;
}
.t-bell {
  margin-left: 11px;
}
</style>
